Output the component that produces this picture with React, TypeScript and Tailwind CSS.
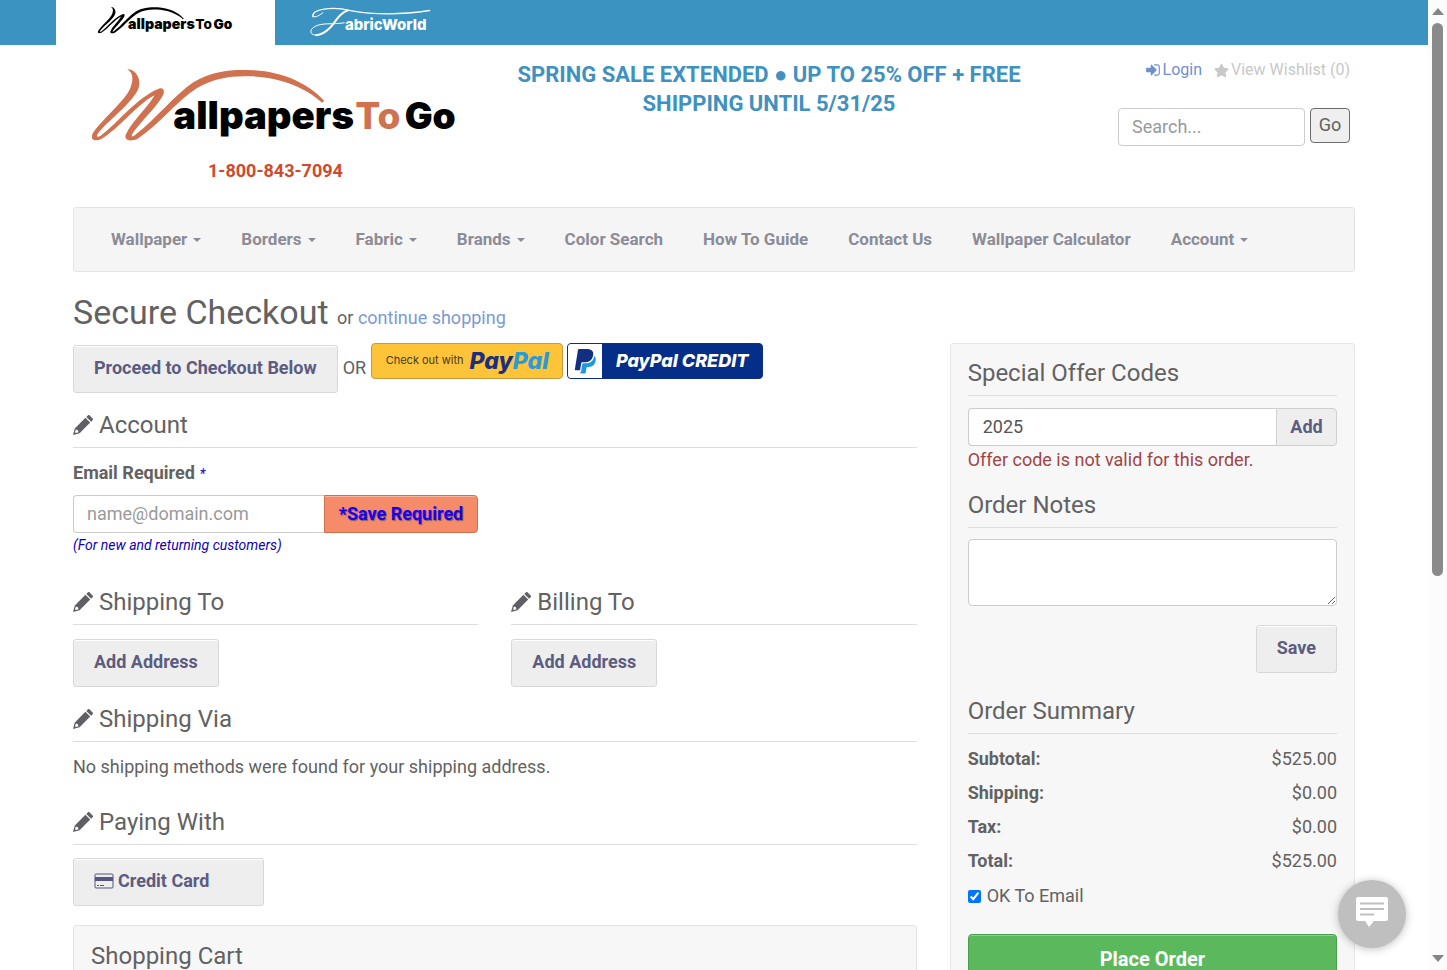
import React from "react";
import { FaStar } from "react-icons/fa";

interface LogoProps {
  swash: string;
  text: string;
  accent: string;
  className: string;
}

function Logo({ swash, text, accent, className }: LogoProps) {
  return (
    <svg
      viewBox="126 200 1104 225"
      className={className}
      role="img"
      aria-label="WallpapersToGo"
    >
      <path
        fill={swash}
        d="M232,207 C256,206 278,236 263,270 C239,316 169,365 142,402 C139,410 143,411 152,406 C200,373 260,290 330,264 C344,262 345,276 336,290 C314,327 266,370 246,402 C244,412 248,410 258,402 C320,353 370,288 430,246 C490,208 560,207 610,210 C700,214 780,253 823,302 L816,307 C770,264 690,230 600,228 C540,226 490,234 440,264 C380,302 330,372 262,416 C240,425 220,420 228,402 C244,365 296,318 314,285 C270,304 205,387 154,416 C134,425 120,418 127,402 C148,365 218,308 238,270 C252,238 250,218 232,207Z"
      />
      <text
        x="370"
        y="387"
        fontSize="115"
        fontWeight="900"
        fill={text}
        className="font-['Inter',sans-serif]"
      >
        allpapers
        <tspan x="916" fontSize="111" fontWeight="800" fill={accent}>
          To
        </tspan>
        <tspan x="1064" fontSize="111">
          Go
        </tspan>
      </text>
    </svg>
  );
}

function FabricLogo() {
  return (
    <svg
      viewBox="780 20 370 95"
      className="h-8 w-[123px]"
      role="img"
      aria-label="FabricWorld"
    >
      <g fill="none" stroke="#fff" strokeLinecap="round">
        <path
          strokeWidth="4"
          d="M792,51 C786,28 850,20 905,33 C980,47 1070,44 1143,33"
        />
        <path
          strokeWidth="6"
          d="M896,33 C868,42 862,66 844,84 C830,98 815,106 802,107"
        />
        <path
          strokeWidth="3"
          d="M802,107 C782,107 780,92 796,82 C820,68 850,76 886,70"
        />
        <path strokeWidth="3" d="M792,51 C800,56 812,46 822,40" />
      </g>
      <text
        x="888"
        y="91"
        fontSize="45"
        fontWeight="800"
        fill="#fff"
        className="font-['Inter',sans-serif]"
      >
        abricWorld
      </text>
    </svg>
  );
}

function Pencil() {
  return (
    <svg
      viewBox="0 0 20 20"
      className="h-5 w-5 shrink-0 fill-[#5f5f66]"
      aria-hidden="true"
    >
      <path
        fillRule="evenodd"
        d="M13.300 1.900 14.800.5c.6-.6 1.300-.6 1.900 0l2.900 2.900c.6.6.6 1.300 0 1.900L18.200 6.700zM12.400 2.800 17.200 7.600 6.600 18.200 0 20 1.800 13.400zM2.900 14.600 2 17.200 3 18.100 5.500 17.200 4.900 15.300z"
      />
    </svg>
  );
}

function CardIcon() {
  return (
    <svg viewBox="0 0 20 16" className="h-4 w-5" aria-hidden="true">
      <rect
        x="1"
        y="1"
        width="18"
        height="14"
        rx="1"
        fill="none"
        stroke="#55557f"
      />
      <path fill="#55557f" d="M1 4h18v4H1zM3 12h2v1H3zM6 12h4v1H6z" />
    </svg>
  );
}

interface HeadingProps {
  children: React.ReactNode;
  pencil?: boolean;
  className?: string;
}

function SectionHeading({ children, pencil, className = "" }: HeadingProps) {
  return (
    <h2
      className={
        "flex items-center gap-1.5 border-b border-[#ddd] pb-1.5 text-2xl leading-8 " +
        className
      }
    >
      {pencil && <Pencil />}
      {children}
    </h2>
  );
}

interface ButtonProps {
  children: React.ReactNode;
  className?: string;
}

function GrayButton({ children, className = "" }: ButtonProps) {
  return (
    <button
      type="button"
      className={
        "flex h-12 items-center gap-1 rounded-[3px] border border-[#d8d8d8] bg-[#eee] px-5 pb-0.5 font-bold text-[#5c5c80] shadow-[inset_0_1px_0_#fff] " +
        className
      }
    >
      {children}
    </button>
  );
}

const navItems = [
  { label: "Wallpaper", menu: true },
  { label: "Borders", menu: true },
  { label: "Fabric", menu: true },
  { label: "Brands", menu: true },
  { label: "Color Search", menu: false },
  { label: "How To Guide", menu: false },
  { label: "Contact Us", menu: false },
  { label: "Wallpaper Calculator", menu: false },
  { label: "Account", menu: true },
];

const totals = [
  { label: "Subtotal:", value: "$525.00" },
  { label: "Shipping:", value: "$0.00" },
  { label: "Tax:", value: "$0.00" },
  { label: "Total:", value: "$525.00" },
];

function TopBar() {
  return (
    <div className="flex h-[45px] bg-[#3b93c1] pl-14">
      <a href="#" className="flex w-[219px] justify-center bg-white pt-1.5">
        <Logo
          swash="#000"
          text="#000"
          accent="#000"
          className="h-7 w-[136px]"
        />
      </a>
      <a href="#" className="flex pl-[34px] pt-1.5">
        <FabricLogo />
      </a>
    </div>
  );
}

function Header() {
  return (
    <header className="grid h-[162px] grid-cols-[405px_582px_1fr]">
      <div className="flex flex-col items-center pt-[22px]">
        <a href="#">
          <Logo
            swash="#d0714f"
            text="#000"
            accent="#d0714f"
            className="h-[75px] w-[368px]"
          />
        </a>
        <p className="mt-4 font-bold leading-[26px] text-[#d0492c]">
          1-800-843-7094
        </p>
      </div>
      <p className="px-6 pt-[15px] text-center text-[22px] font-bold leading-[29px] text-[#3f92bf]">
        SPRING SALE EXTENDED ● UP TO 25% OFF + FREE SHIPPING UNTIL 5/31/25
      </p>
      <div className="flex flex-col items-end pr-[5px] pt-[13px]">
        <div className="flex gap-3 text-base leading-6">
          <a href="#" className="flex items-center gap-0.5 text-[#6f8fd0]">
            <svg
              viewBox="0 0 1792 1792"
              className="h-4 w-4 fill-current"
              aria-hidden="true"
            >
              <path d="M1312 896q0 26-19 45l-544 544q-19 19-45 19t-45-19-19-45v-288h-448q-26 0-45-19t-19-45v-384q0-26 19-45t45-19h448v-288q0-26 19-45t45-19 45 19l544 544q19 19 19 45zm352-352v704q0 119-84.5 203.5t-203.5 84.5h-320q-13 0-22.500-9.500t-9.500-22.500q0-4-1-20t-.5-26.500 3-23.500 10-19.500 20.500-6.500h320q66 0 113-47t47-113v-704q0-66-47-113t-113-47h-312l-11.500-1-11.500-3-8-5.500-7-9-2-13.500q0-4-1-20t-.5-26.500 3-23.500 10-19.500 20.500-6.500h320q119 0 203.500 84.500t84.500 203.500z" />
            </svg>
            Login
          </a>
          <a href="#" className="flex items-center gap-0.5 text-[#c8c8c8]">
            <FaStar className="h-[15px] w-[15px]" />
            View Wishlist (0)
          </a>
        </div>
        <form className="mt-[26px] flex gap-[5px]">
          <input
            type="text"
            aria-label="Search"
            placeholder="Search..."
            className="h-[38px] w-[187px] rounded border border-[#ccc] bg-white px-[13px] pb-0.5 placeholder:text-[#999]"
          />
          <button
            type="button"
            className="h-[35px] w-10 rounded-sm border border-[#6b6b6b] bg-[#efefef] pb-0.5"
          >
            Go
          </button>
        </form>
      </div>
    </header>
  );
}

function NavBar() {
  return (
    <nav className="flex h-[65px] items-center rounded-[3px] border border-[#e3e3e3] bg-[#f5f5f5] px-[17px] text-[17px] font-bold text-[#8c8c96]">
      {navItems.map((item) => (
        <a
          key={item.label}
          href="#"
          className="flex items-center gap-1.5 whitespace-nowrap px-5"
        >
          {item.label}
          {item.menu && (
            <span className="border-x-4 border-t-4 border-x-transparent border-t-[#8c8c96]" />
          )}
        </a>
      ))}
    </nav>
  );
}

function PayPalButtons() {
  return (
    <div className="flex gap-1">
      <button
        type="button"
        className="flex h-9 w-48 items-center justify-center gap-1.5 rounded border border-[#c99a3c] bg-[#fdc439]"
      >
        <span className="font-['Inter',sans-serif] text-[11px] text-[#3d3a2a]">
          Check out with
        </span>
        <span className="font-['Inter',sans-serif] text-[23px] font-extrabold italic leading-8 text-[#1b2f7c]">
          Pay<span className="text-[#2a9bd8]">Pal</span>
        </span>
      </button>
      <button
        type="button"
        className="flex h-9 w-[196px] overflow-hidden rounded border border-[#0a2f87] bg-[#042e87]"
      >
        <span className="flex h-full w-[34px] items-center justify-center bg-white">
          <svg viewBox="0 0 24 25" className="h-[25px] w-6" aria-hidden="true">
            <path
              fill="#1b9ade"
              d="M21.222 6.917c-.013.076-.026.175-.041.254-.93 4.778-4.005 7.201-9.138 7.201h-2.190a.563.563 0 0 0-.556.479l-1.187 7.527h-.506l-.24 1.516a.56.56 0 0 0 .554.647h3.882c.46 0 .85-.334.922-.788.06-.26.76-4.852.816-5.090a.932.932 0 0 1 .923-.788h.58c3.760 0 6.705-1.528 7.565-5.946.36-1.847.174-3.388-.777-4.471z"
            />
            <path
              fill="#12307f"
              d="M7.076 21.337H2.470a.641.641 0 0 1-.633-.74L4.944.901C5.026.382 5.474 0 5.998 0h7.460c2.570 0 4.578.543 5.690 1.810 1.010 1.150 1.304 2.420 1.012 4.287-.023.143-.047.288-.077.437-.983 5.050-4.349 6.797-8.647 6.797h-2.190c-.524 0-.968.382-1.050.9z"
            />
          </svg>
        </span>
        <span className="flex-1 font-['Inter',sans-serif] text-lg font-extrabold italic leading-[34px] text-white">
          PayPal CREDIT
        </span>
      </button>
    </div>
  );
}

function CheckoutSteps() {
  return (
    <div className="col-span-2">
      <div className="flex h-[50px] items-start gap-[5px]">
        <GrayButton className="mt-0.5">Proceed to Checkout Below</GrayButton>
        <span className="mt-3 leading-[26px]">OR</span>
        <PayPalButtons />
      </div>

      <SectionHeading pencil className="mt-4">
        Account
      </SectionHeading>
      <div className="w-[405px]">
        <label
          htmlFor="email"
          className="mt-3 block font-bold leading-[26px]"
        >
          Email Required{" "}
          <span className="text-sm font-normal italic text-[#1010c0]">*</span>
        </label>
        <div className="mt-[9px] flex h-[38px]">
          <input
            id="email"
            type="email"
            placeholder="name@domain.com"
            className="min-w-0 flex-1 rounded-l border border-r-0 border-[#ccc] bg-white px-[13px] placeholder:text-[#999]"
          />
          <button
            type="button"
            className="w-[154px] rounded-r border border-[#d0704c] bg-[#f68b6a] font-bold text-[#1a00e6] shadow-[inset_0_1px_0_#fbb49c] text-shadow-[1px_1px_1px_#7a5a6a]"
          >
            *Save Required
          </button>
        </div>
        <p className="mt-0.5 text-sm italic leading-5 text-[#1000b4]">
          (For new and returning customers)
        </p>
      </div>

      <div className="mt-[31px] grid grid-cols-2 gap-[33px]">
        <div>
          <SectionHeading pencil>Shipping To</SectionHeading>
          <GrayButton className="mt-3.5">Add Address</GrayButton>
        </div>
        <div>
          <SectionHeading pencil>Billing To</SectionHeading>
          <GrayButton className="mt-3.5">Add Address</GrayButton>
        </div>
      </div>

      <SectionHeading pencil className="mt-4">
        Shipping Via
      </SectionHeading>
      <p className="mt-3 leading-[26px]">
        No shipping methods were found for your shipping address.
      </p>

      <SectionHeading pencil className="mt-[26px]">
        Paying With
      </SectionHeading>
      <GrayButton className="mt-[13px] w-[191px]">
        <CardIcon />
        Credit Card
      </GrayButton>

      <section className="mt-[19px] rounded-[3px] border border-[#e3e3e3] bg-[#f7f7f7] px-[17px] pb-6 pt-3.5">
        <SectionHeading>Shopping Cart</SectionHeading>
      </section>
    </div>
  );
}

function OrderPanel() {
  return (
    <aside className="rounded-[3px] border border-[#e6e6e6] bg-[#f7f7f7] px-[17px] pb-6 pt-[13px]">
      <SectionHeading>Special Offer Codes</SectionHeading>
      <div className="mt-3 flex h-[38px]">
        <input
          type="text"
          aria-label="Offer code"
          defaultValue="2025"
          className="min-w-0 flex-1 rounded-l border border-r-0 border-[#ccc] bg-white px-[14px] text-[#555]"
        />
        <button
          type="button"
          className="w-[61px] rounded-r border border-[#d0d0d0] bg-[#eee] font-bold text-[#5c5c80]"
        >
          Add
        </button>
      </div>
      <p className="mt-px leading-[26px] text-[#a04545]">
        Offer code is not valid for this order.
      </p>

      <SectionHeading className="mt-4">Order Notes</SectionHeading>
      <textarea
        aria-label="Order Notes"
        className="mt-[11px] block h-[67px] w-full rounded border border-[#ccc] bg-white"
      />
      <div className="mt-[19px] flex justify-end">
        <GrayButton>Save</GrayButton>
      </div>

      <SectionHeading className="mt-[22px]">Order Summary</SectionHeading>
      <table className="mt-2 w-full">
        <tbody>
          {totals.map((row) => (
            <tr key={row.label} className="h-[34px]">
              <th scope="row" className="text-left font-bold">
                {row.label}
              </th>
              <td className="text-right">{row.value}</td>
            </tr>
          ))}
        </tbody>
      </table>
      <label className="mt-[5px] flex items-center gap-1.5 leading-[26px]">
        <input type="checkbox" defaultChecked className="h-[13px] w-[13px]" />
        OK To Email
      </label>
      <button
        type="button"
        className="mt-[25px] h-[51px] w-full rounded border border-[#4aa04a] bg-[#5cb85c] pb-0.5 text-xl font-bold text-white shadow-[inset_0_1px_0_#8fd08f]"
      >
        Place Order
      </button>
    </aside>
  );
}

function ScrollBar() {
  return (
    <div className="flex w-[19px] shrink-0 flex-col items-center bg-[#fcfcfc] py-2">
      <span className="border-x-[6px] border-b-[7px] border-x-transparent border-b-[#858585]" />
      <span className="mt-2 h-[58%] w-[11px] rounded-full bg-[#8a8a8a]" />
      <span className="mt-auto border-x-[6px] border-t-[7px] border-x-transparent border-t-[#858585]" />
    </div>
  );
}

export default function App() {
  return (
    <div className="flex h-screen overflow-hidden bg-white font-['Roboto',sans-serif] text-lg text-[#626262]">
      <div className="min-w-0 flex-1">
        <TopBar />
        <div className="mx-auto w-full max-w-[1282px]">
          <Header />
          <NavBar />
          <h1 className="mb-[11px] mt-5 text-[34px] leading-10">
            Secure Checkout{" "}
            <span className="text-lg">
              or{" "}
              <a href="#" className="text-[#7b9ad2]">
                continue shopping
              </a>
            </span>
          </h1>
          <main className="grid grid-cols-3 gap-[33px]">
            <CheckoutSteps />
            <OrderPanel />
          </main>
        </div>
      </div>
      <ScrollBar />

      <button
        type="button"
        aria-label="Chat"
        className="fixed bottom-[22px] right-[41px] flex h-[68px] w-[68px] items-center justify-center rounded-full bg-[#bfbfbf] shadow-[0_1px_8px_rgba(0,0,0,0.25)]"
      >
        <svg viewBox="0 0 32 30" className="mb-1 h-[30px] w-8" aria-hidden="true">
          <path
            fill="#fff"
            d="M2 0h28a2 2 0 0 1 2 2v20a2 2 0 0 1-2 2H18l-5 6-4-6H2a2 2 0 0 1-2-2V2a2 2 0 0 1 2-2z"
          />
          <path
            fill="none"
            stroke="#bfbfbf"
            strokeWidth="2"
            d="M4 6.500h24M4 12h24M4 17.500h14"
          />
        </svg>
      </button>
    </div>
  );
}
